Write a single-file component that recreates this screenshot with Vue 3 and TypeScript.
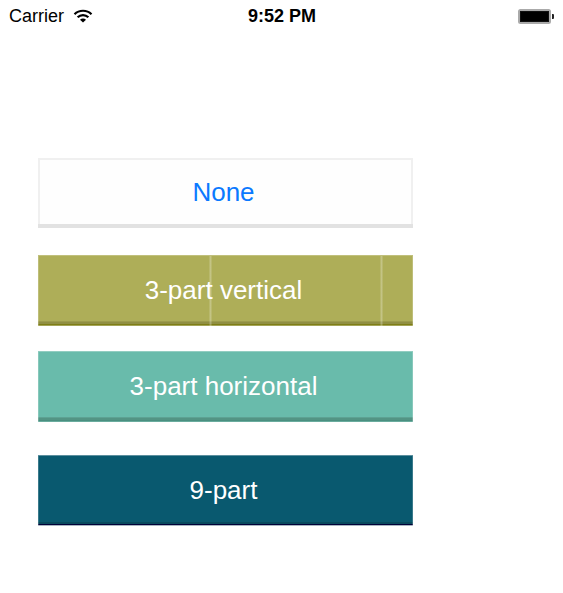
<script setup lang="ts">
interface SliceButton {
  label: string
  kind: 'none' | 'vertical' | 'horizontal' | 'nine'
}

const buttons: SliceButton[] = [
  { label: 'None', kind: 'none' },
  { label: '3-part vertical', kind: 'vertical' },
  { label: '3-part horizontal', kind: 'horizontal' },
  { label: '9-part', kind: 'nine' },
]
</script>

<template>
  <div class="screen">
    <header class="status">
      <div class="carrier">
        <span>Carrier</span>
        <svg class="wifi" width="20" height="14" viewBox="0 0 20 14" aria-hidden="true">
          <g fill="none" stroke="#000" stroke-width="2.2">
            <path d="M1.5 5.2C6.2 .6 13.8 .6 18.5 5.2" />
            <path d="M4.6 8.3C7.6 5.3 12.4 5.3 15.4 8.3" />
          </g>
          <path d="M7 10.7C8.6 9.1 11.4 9.1 13 10.7L10 13.6Z" fill="#000" />
        </svg>
      </div>
      <time class="clock">9:52 PM</time>
      <div class="power">
        <svg width="37" height="15" viewBox="0 0 37 15" aria-hidden="true">
          <rect x="1" y="1" width="31" height="13" rx="1.5" fill="#aaa" stroke="#aaa" stroke-width="2" />
          <rect x="2" y="2" width="29" height="11" fill="#111" />
          <rect x="3" y="3" width="27" height="9" fill="#000" />
          <path d="M34 5h1q1 0 1 1v3q0 1-1 1h-1z" fill="#222" />
        </svg>
      </div>
    </header>

    <main class="list">
      <button v-for="b in buttons" :key="b.kind" type="button" class="slice" :class="b.kind">
        {{ b.label }}
      </button>
    </main>
  </div>
</template>

<style>
body {
  background: #fff;
}
</style>

<style scoped>
.screen {
  font-family: "Liberation Sans", Arial, sans-serif;
  color: #000;
}

.status {
  display: grid;
  grid-template-columns: 1fr auto 1fr;
  align-items: center;
  height: 32px;
  padding: 0 8px 0 9px;
  font-size: 18px;
}

.carrier {
  display: flex;
  align-items: center;
  gap: 9px;
}

.clock {
  font-weight: bold;
}

.power {
  display: flex;
  justify-content: flex-end;
}

.list {
  display: flex;
  flex-direction: column;
  padding: 126px 150px 40px 38px;
}

.slice {
  box-sizing: border-box;
  height: 71px;
  margin: 0;
  padding: 0 4px 2px 0;
  border: 0;
  border-radius: 0;
  font-family: inherit;
  font-size: 26px;
  line-height: 32px;
  color: #fff;
  text-align: center;
}

.none {
  height: 70px;
  margin-bottom: 27px;
  color: #0b79ff;
  background: #fefefe;
  box-shadow: inset 0 -4px #e2e2e2, inset 0 0 0 2px #f0f0f0;
}

.vertical {
  --seam: linear-gradient(90deg, #ffffff22 1px, #ffffff44 1px 2px, #ffffff22 2px);
  margin-bottom: 25px;
  background:
    var(--seam) 46% 0 / 3px 100% no-repeat,
    var(--seam) 92% 0 / 3px 100% no-repeat,
    linear-gradient(0deg, #a5a557 1px, #7e7d16 1px 2px, #908f42 2px 4px, #9c9b4c 4px 5px, #aeae58 5px);
  box-shadow: inset 0 1px #c0c07c, inset 1px 0 #ffffff33, inset -1px 0 #ffffff33;
}

.horizontal {
  margin-bottom: 33px;
  background: linear-gradient(0deg, #6aac9e 1px, #4a8f80 1px 2px, #539484 2px 4px, #5da293 4px 5px, #69bbab 5px);
  box-shadow: inset 0 1px #92cdc1, inset 1px 0 #ffffff33, inset -1px 0 #ffffff33;
}

.nine {
  background: linear-gradient(0deg, #a7b5c1 1px, #000038 1px 2px, #094a5d 2px 4px, #09596f 4px);
  box-shadow: inset 0 1px #5c8f9e, inset 1px 0 #ffffff33, inset -1px 0 #ffffff33;
}
</style>
